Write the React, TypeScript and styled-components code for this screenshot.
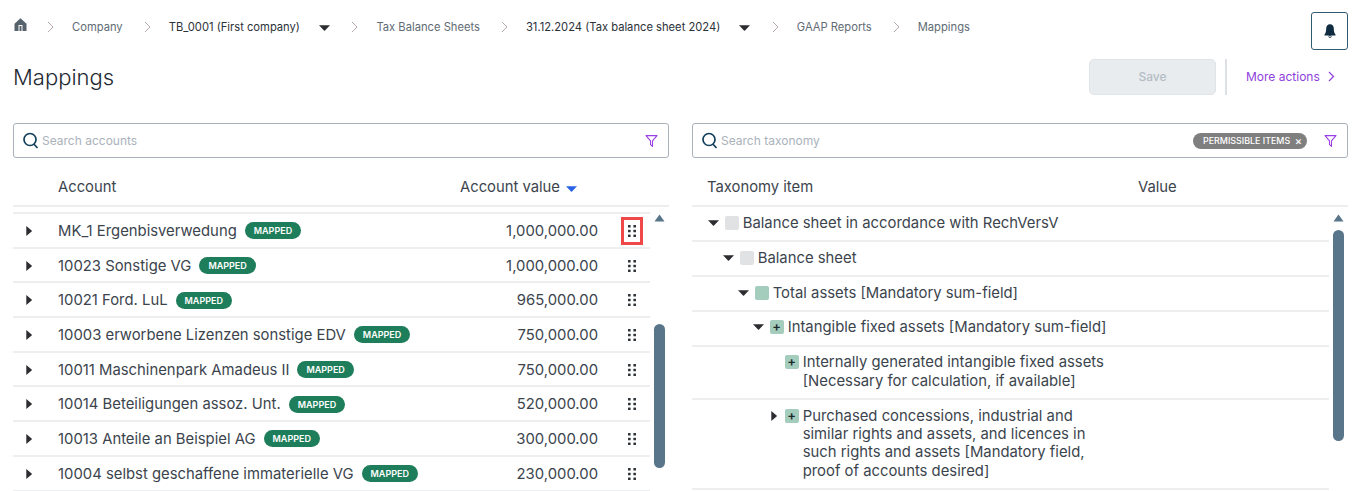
import React from 'react'
import styled, { createGlobalStyle } from 'styled-components'

const GlobalStyle = createGlobalStyle`
  html, body {
    margin: 0;
    padding: 0;
    background: #fff;
    overflow: hidden;
  }
  body {
    font-family: Inter, "Liberation Sans", sans-serif;
    color: #39424e;
  }
  * {
    box-sizing: border-box;
  }
`

const accounts = [
  { name: 'MK_1 Ergenbisverwedung', value: '1,000,000.00', active: true },
  { name: '10023 Sonstige VG', value: '1,000,000.00' },
  { name: '10021 Ford. LuL', value: '965,000.00' },
  { name: '10003 erworbene Lizenzen sonstige EDV', value: '750,000.00' },
  { name: '10011 Maschinenpark Amadeus II', value: '750,000.00' },
  { name: '10014 Beteiligungen assoz. Unt.', value: '520,000.00' },
  { name: '10013 Anteile an Beispiel AG', value: '300,000.00' },
  { name: '10004 selbst geschaffene immaterielle VG', value: '230,000.00' },
]

type Swatch = 'grey' | 'green' | 'plus'

const taxonomy: { label: React.ReactNode; level: number; caret?: 'down' | 'right'; swatch: Swatch }[] = [
  { label: 'Balance sheet in accordance with RechVersV', level: 0, caret: 'down', swatch: 'grey' },
  { label: 'Balance sheet', level: 1, caret: 'down', swatch: 'grey' },
  { label: 'Total assets [Mandatory sum-field]', level: 2, caret: 'down', swatch: 'green' },
  { label: 'Intangible fixed assets [Mandatory sum-field]', level: 3, caret: 'down', swatch: 'plus' },
  {
    label: 'Internally generated intangible fixed assets [Necessary for calculation, if available]',
    level: 4,
    swatch: 'plus',
  },
  {
    label: 'Purchased concessions, industrial and similar rights and assets, and licences in such rights and assets [Mandatory field, proof of accounts desired]',
    level: 4,
    caret: 'right',
    swatch: 'plus',
  },
]

const Chevron = () => (
  <ChevronIcon width="7" height="12" viewBox="0 0 7 12" fill="none">
    <path d="M1 1l5 5-5 5" stroke="#b9a9ad" strokeWidth="1" />
  </ChevronIcon>
)

const HomeIcon = () => (
  <svg width="13" height="13" viewBox="0 0 13 13">
    <path
      fill="#56626c"
      fillRule="evenodd"
      d="M6.500 .3 .5 5.800V13h12V5.800L6.500 .3zM4.500 7h4v6H7.500V8h-2v5h-1V7z"
    />
  </svg>
)

const BellIcon = () => (
  <svg width="12" height="14" viewBox="0 0 12 14">
    <path
      fill="#0f2c40"
      d="M6 .2C3.600.2 2.200 2 2.200 4.500c0 2.800-.5 4.700-1.700 6v1h11v-1c-1.200-1.300-1.700-3.200-1.700-6C9.800 2 8.400.2 6 .2z"
    />
    <circle cx="6" cy="12.400" r="1.200" fill="none" stroke="#0f2c40" strokeWidth="0.800" />
  </svg>
)

const SearchIcon = () => (
  <SearchSvg width="16" height="17" viewBox="0 0 16 17" fill="none">
    <circle cx="7" cy="7.500" r="6" stroke="#12405c" strokeWidth="1.700" />
    <path d="M10.800 12l3.700 4" stroke="#12405c" strokeWidth="1.700" />
  </SearchSvg>
)

const FilterIcon = () => (
  <FilterSvg width="13" height="12" viewBox="0 0 13 12" fill="none">
    <path d="M1 .6h11L7.500 5.800v5.600L5.500 9.600V5.800L1 .6z" stroke="#9a3fe6" strokeWidth="1.100" strokeLinejoin="round" />
  </FilterSvg>
)

const DragDots = () => (
  <svg width="8" height="12" viewBox="0 0 8 12">
    {[1.2, 6, 10.8].map((y) =>
      [1.3, 6.7].map((x) => <rect key={`${x}-${y}`} x={x - 1.3} y={y - 1.3} width="2.600" height="2.600" rx="0.600" fill="#2c3339" />),
    )}
  </svg>
)

const Caret = ({ dir }: { dir: 'down' | 'right' }) =>
  dir === 'down' ? (
    <svg width="11" height="6" viewBox="0 0 11 6">
      <path d="M0 .3h11L6 5.600a.7.7 0 0 1-1 0z" fill="#2c2d30" />
    </svg>
  ) : (
    <svg width="6" height="10" viewBox="0 0 6 10">
      <path d="M.3 0v10l5.300-4.500a.6.6 0 0 0 0-1z" fill="#2c2d30" />
    </svg>
  )

const Scrollbar = ({ top, height }: { top: number; height: number }) => (
  <ScrollTrack>
    <svg width="11" height="8" viewBox="0 0 11 8">
      <path d="M5.500 .5 10.500 7.500H.5z" fill="#58758a" />
    </svg>
    <ScrollThumb $top={top} $height={height} />
  </ScrollTrack>
)

const App: React.FC = () => (
  <Page>
    <GlobalStyle />
    <TopBar>
      <Breadcrumbs>
        <HomeLink><HomeIcon /></HomeLink>
        <Chevron />
        <Crumb>Company</Crumb>
        <Chevron />
        <Crumb $strong>TB_0001 (First company)</Crumb>
        <CrumbCaret><Caret dir="down" /></CrumbCaret>
        <Chevron />
        <Crumb>Tax Balance Sheets</Crumb>
        <Chevron />
        <Crumb $strong>31.12.2024 (Tax balance sheet 2024)</Crumb>
        <CrumbCaret><Caret dir="down" /></CrumbCaret>
        <Chevron />
        <Crumb>GAAP Reports</Crumb>
        <Chevron />
        <Crumb>Mappings</Crumb>
      </Breadcrumbs>
      <BellButton><BellIcon /></BellButton>
    </TopBar>

    <TitleRow>
      <Title>Mappings</Title>
      <Actions>
        <SaveButton>Save</SaveButton>
        <Divider />
        <MoreActions>
          More actions
          <svg width="7" height="11" viewBox="0 0 7 11" fill="none">
            <path d="M1 1l4.500 4.500L1 10" stroke="#8f3fdc" strokeWidth="1.200" />
          </svg>
        </MoreActions>
      </Actions>
    </TitleRow>

    <Panels>
      <Panel>
        <SearchBox>
          <SearchIcon />
          <SearchText>Search accounts</SearchText>
          <FilterIcon />
        </SearchBox>
        <HeaderRow>
          <AccountHead>Account</AccountHead>
          <ValueHead>
            Account value
            <svg width="11" height="6" viewBox="0 0 11 6">
              <path d="M0 .3h11L6 5.600a.7.7 0 0 1-1 0z" fill="#2a62e6" />
            </svg>
          </ValueHead>
        </HeaderRow>
        <ListArea>
          <List $topRule>
            {accounts.map((a) => (
              <AccountRow key={a.name}>
                <RowCaret><Caret dir="right" /></RowCaret>
                <AccountName>{a.name}</AccountName>
                <MappedBadge>MAPPED</MappedBadge>
                <AccountValue>{a.value}</AccountValue>
                <DragHandle $active={a.active}><DragDots /></DragHandle>
              </AccountRow>
            ))}
          </List>
          <Scrollbar top={102} height={144} />
        </ListArea>
      </Panel>

      <Panel>
        <SearchBox>
          <SearchIcon />
          <SearchText>Search taxonomy</SearchText>
          <Chip>PERMISSIBLE ITEMS <ChipClose>×</ChipClose></Chip>
          <FilterIcon />
        </SearchBox>
        <HeaderRow>
          <TaxonomyHead>Taxonomy item</TaxonomyHead>
          <TaxonomyValueHead>Value</TaxonomyValueHead>
        </HeaderRow>
        <ListArea>
          <List>
            {taxonomy.map((t, i) => (
              <TaxonomyRow key={i} $level={t.level}>
                <TreeCaret>{t.caret && <Caret dir={t.caret} />}</TreeCaret>
                <SwatchBox $kind={t.swatch}>{t.swatch === 'plus' && '+'}</SwatchBox>
                <TaxonomyLabel>{t.label}</TaxonomyLabel>
              </TaxonomyRow>
            ))}
          </List>
          <Scrollbar top={8} height={211} />
        </ListArea>
      </Panel>
    </Panels>
  </Page>
)

const Page = styled.div`
  width: 1360px;
  height: 491px;
  overflow: hidden;
  padding: 0 12px 0 13px;
`

const TopBar = styled.div`
  display: flex;
  justify-content: space-between;
  padding-top: 12px;
  height: 50px;
`

const Breadcrumbs = styled.nav`
  display: flex;
  align-items: center;
  height: 30px;
  font-size: 11.200px;
`

const HomeLink = styled.span`
  display: flex;
  margin: -6px 20px 0 1px;
`

const ChevronIcon = styled.svg`
  margin-right: 18px;
  flex-shrink: 0;
`

const Crumb = styled.span<{ $strong?: boolean }>`
  color: ${(p) => (p.$strong ? '#2b3138' : '#616b75')};
  margin-right: 21px;
  white-space: nowrap;
`

const CrumbCaret = styled.span`
  display: flex;
  margin: 2px 21.500px 0 -2px;
`

const BellButton = styled.button`
  width: 37px;
  height: 38px;
  display: flex;
  align-items: center;
  justify-content: center;
  padding: 0;
  background: #fff;
  border: 1px solid #2f5a70;
  border-radius: 3px;
`

const TitleRow = styled.div`
  display: flex;
  justify-content: space-between;
  align-items: flex-start;
  height: 73px;
  padding-top: 9px;
`

const Title = styled.h1`
  margin: 0;
  font-size: 22px;
  font-weight: 300;
  line-height: 36px;
  color: #1f2a33;
`

const Actions = styled.div`
  display: flex;
  align-items: center;
  height: 36px;
`

const SaveButton = styled.button`
  width: 127px;
  height: 36px;
  padding: 0 0 2px;
  background: #e8ecef;
  border: 1px solid #dfe4e8;
  border-radius: 5px;
  color: #b4bcc4;
  font: 500 12px Inter, sans-serif;
`

const Divider = styled.span`
  width: 2px;
  height: 36px;
  background: #dde1e5;
  margin: 0 19px 0 9px;
`

const MoreActions = styled.a`
  display: flex;
  align-items: center;
  gap: 8px;
  width: 102px;
  padding: 0 12px 2px 0;
  font-size: 12px;
  color: #8f3fdc;
  white-space: nowrap;
`

const Panels = styled.div`
  display: grid;
  grid-template-columns: 656px 656px;
  column-gap: 23px;
`

const Panel = styled.section`
  min-width: 0;
`

const SearchBox = styled.div`
  display: flex;
  align-items: center;
  height: 35px;
  padding: 0 10px 0 9px;
  border: 1px solid #a9b2ba;
  border-radius: 3px;
`

const SearchSvg = styled.svg`
  flex-shrink: 0;
  margin-right: 3px;
`

const FilterSvg = styled.svg`
  flex-shrink: 0;
`

const SearchText = styled.span`
  flex: 1;
  font-size: 12px;
  color: #aab2bb;
`

const Chip = styled.span`
  display: flex;
  align-items: center;
  justify-content: space-between;
  width: 114px;
  height: 16px;
  padding: 0 5px 0 10px;
  margin-right: 17px;
  border-radius: 8px;
  background: #7f7f7f;
  color: #fff;
  font-size: 8.900px;
  font-weight: 500;
  white-space: nowrap;
`

const ChipClose = styled.span`
  font-size: 11px;
`

const HeaderRow = styled.div`
  display: flex;
  align-items: center;
  height: 49px;
  padding-top: 10px;
  border-bottom: 2px solid #eceeef;
  font-size: 14.800px;
  color: #3b444d;
`

const AccountHead = styled.span`
  margin-left: 45px;
  width: 402px;
`

const ValueHead = styled.span`
  display: flex;
  align-items: center;
  gap: 6px;

  svg {
    margin-top: 4px;
  }
`

const TaxonomyHead = styled.span`
  margin-left: 15px;
  width: 431px;
`

const TaxonomyValueHead = styled.span``

const ListArea = styled.div`
  display: flex;
  align-items: flex-start;
`

const List = styled.div<{ $topRule?: boolean }>`
  width: 637px;
  flex-shrink: 0;
  ${(p) => p.$topRule && 'margin-top: 5px; border-top: 2px solid #eceeef;'}
`

const AccountRow = styled.div`
  display: flex;
  align-items: center;
  height: 34.700px;
  padding-top: 1px;
  border-bottom: 2px solid #eceeef;
  font-size: 14.850px;
  color: #3b444d;
`

const RowCaret = styled.span`
  display: flex;
  width: 45px;
  padding-left: 13px;
`

const AccountName = styled.span`
  white-space: nowrap;
`

const MappedBadge = styled.span`
  margin-left: 8px;
  height: 17px;
  padding: 0 9px;
  display: flex;
  align-items: center;
  border-radius: 9px;
  background: #1e7d5a;
  color: #fff;
  font-size: 9px;
  font-weight: 600;
`

const AccountValue = styled.span`
  margin-left: auto;
  margin-right: 23px;
`

const DragHandle = styled.span<{ $active?: boolean }>`
  width: 22px;
  height: 28px;
  display: flex;
  align-items: center;
  justify-content: center;
  margin-right: 7px;
  border: 3px solid ${(p) => (p.$active ? '#f04848' : 'transparent')};
`

const TaxonomyRow = styled.div<{ $level: number }>`
  display: flex;
  align-items: flex-start;
  padding: 6.800px 219px 7.700px ${(p) => 15.700 + p.$level * 15}px;
  min-height: 34.700px;
  border-bottom: 2px solid #eceeef;
  font-size: 14.850px;
  line-height: 18.400px;
  color: #3b444d;
`

const TreeCaret = styled.span`
  display: flex;
  justify-content: center;
  align-items: center;
  width: 12px;
  height: 18px;
  margin-right: 5px;
  flex-shrink: 0;
`

const SwatchBox = styled.span<{ $kind: Swatch }>`
  width: 14px;
  height: 14px;
  margin: 2px 4px 0 0;
  flex-shrink: 0;
  border-radius: 2px;
  display: flex;
  align-items: center;
  justify-content: center;
  padding-bottom: 2px;
  background: ${(p) => (p.$kind === 'grey' ? '#e1e2e4' : '#a4cdbd')};
  color: #1d2a2a;
  font-size: 13px;
  line-height: 12px;
  font-weight: 600;
`

const TaxonomyLabel = styled.span`
  flex: 1;
  min-width: 0;
`

const ScrollTrack = styled.div`
  display: flex;
  flex-direction: column;
  align-items: center;
  width: 12px;
  margin-left: 3px;
  padding-top: 7px;
`

const ScrollThumb = styled.div<{ $top: number; $height: number }>`
  width: 11px;
  margin-top: ${(p) => p.$top}px;
  height: ${(p) => p.$height}px;
  border-radius: 6px;
  background: #58758a;
`

export default App
